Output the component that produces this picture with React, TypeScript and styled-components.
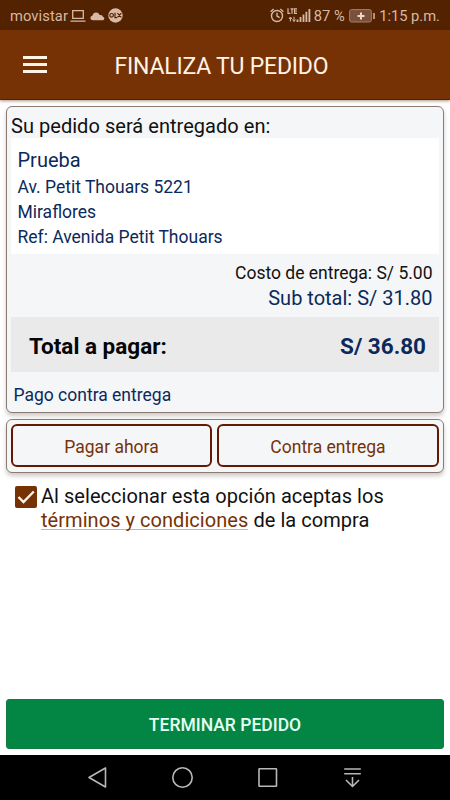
import React from "react";
import styled, { createGlobalStyle } from "styled-components";

const brown = "#763205";
const navy = "#0b2a5b";

const GlobalStyle = createGlobalStyle`
  *, *::before, *::after { box-sizing: border-box; }
  body { margin: 0; background: #fff; font-family: Roboto, sans-serif; }
  button { font-family: inherit; padding: 0; margin: 0; }
`;

const Screen = styled.div`
  width: 450px;
  height: 800px;
  display: flex;
  flex-direction: column;
  background: #fff;
  overflow: hidden;
`;

const StatusBar = styled.div`
  height: 30px;
  flex: none;
  display: flex;
  justify-content: space-between;
  padding: 1px 10px 0;
  background: #522201;
  color: #d8b9a5;
  font-size: 15px;
  line-height: 30px;
  white-space: nowrap;
`;

const StatusGroup = styled.div`
  display: flex;
  align-items: center;
  height: 29px;
`;

const StatusText = styled.span<{ $size?: number; $spacing?: number; $gap?: number }>`
  font-size: ${(p) => p.$size ?? 15}px;
  letter-spacing: ${(p) => p.$spacing ?? 0}px;
  margin-left: ${(p) => p.$gap ?? 0}px;
`;

const StatusIcon = styled.svg<{ $gap?: number }>`
  display: block;
  flex: none;
  margin-left: ${(p) => p.$gap ?? 0}px;
`;

const AppBar = styled.header`
  height: 70px;
  flex: none;
  display: flex;
  align-items: center;
  padding-left: 23px;
  background: ${brown};
  border-bottom: 1px solid #621c00;
  box-shadow: 0 1px 3px rgba(90, 40, 20, 0.5);
  color: #fff3e6;
`;

const MenuButton = styled.button`
  width: 24px;
  height: 17px;
  border: 0;
  background: none;
  display: flex;
  flex-direction: column;
  justify-content: space-between;
`;

const MenuLine = styled.span`
  display: block;
  width: 24px;
  height: 3px;
  background: #fff3e6;
`;

const Title = styled.h1`
  margin: 5px 0 0 67.5px;
  font-size: 23px;
  font-weight: 400;
  line-height: 30px;
  letter-spacing: -0.21px;
  white-space: nowrap;
`;

const Content = styled.main`
  flex: 1;
  display: flex;
  flex-direction: column;
  padding: 6px 6px;
`;

const Card = styled.section<{ $height: number }>`
  height: ${(p) => p.$height}px;
  flex: none;
  border: 1px solid #8c7b73;
  border-radius: 6px;
  background: #f4f6f8;
  box-shadow: 0 3px 4px rgba(60, 50, 40, 0.26);
`;

const OrderCard = styled(Card)`
  display: flex;
  flex-direction: column;
  padding: 6px 4px 0;
`;

const Line = styled.p<{ $size: number; $height: number; $color?: string; $spacing?: number }>`
  margin: 0;
  font-size: ${(p) => p.$size}px;
  line-height: ${(p) => p.$height}px;
  color: ${(p) => p.$color ?? "#111"};
  letter-spacing: ${(p) => p.$spacing ?? 0}px;
  white-space: nowrap;
`;

const Address = styled.div`
  height: 116px;
  margin-top: -1px;
  padding: 8px 7px 0 6.5px;
  background: #fff;
`;

const Costs = styled.div`
  height: 63px;
  padding: 7px 6.5px 0;
  text-align: right;
`;

const Total = styled.div`
  height: 55px;
  display: flex;
  justify-content: space-between;
  align-items: center;
  padding: 3px 13px 0 18px;
  background: #eaeaea;
  font-size: 22.5px;
  font-weight: 700;
  color: #050505;
  white-space: nowrap;
`;

const Amount = styled.span`
  color: ${navy};
`;

const Method = styled.div`
  padding: 11px 2.5px 0;
`;

const PayCard = styled(Card)`
  display: flex;
  gap: 5px;
  margin-top: 6px;
  padding: 4px;
`;

const PayButton = styled.button<{ $width: number }>`
  width: ${(p) => p.$width}px;
  height: 43px;
  border: 2px solid #641a02;
  border-radius: 6px;
  background: #f4f6f8;
  color: ${brown};
  font-size: 17.5px;
  padding-top: 2px;
  line-height: 24px;
`;

const Terms = styled.label`
  display: flex;
  margin: 11px 0 0 9px;
`;

const CheckBox = styled.span`
  width: 22px;
  height: 22px;
  margin-top: 2px;
  flex: none;
  border-radius: 2px;
  background: ${brown};
`;

const TermsText = styled.div`
  margin-left: 4px;
`;

const TermsLink = styled.a`
  display: inline-block;
  height: 22px;
  line-height: 24px;
  color: ${brown};
  border-bottom: 1px solid #c9b6a0;
`;

const SubmitButton = styled.button`
  height: 50px;
  margin-top: auto;
  border: 1px solid #167a43;
  border-radius: 3px;
  background: #038544;
  color: #e6fff1;
  font-size: 17.5px;
  font-weight: 500;
  padding-top: 2px;
`;

const NavBar = styled.nav`
  height: 45px;
  flex: none;
  background: #000;
`;

const Notices = () => (
  <>
    <StatusIcon $gap={2.2} width="16" height="14" viewBox="0 0 16 14" fill="none" stroke="#d8b9a5" strokeWidth="1.3">
      <path d="M2.7 1.7h10.6v7.6H2.7zM.5 12.2h15" />
    </StatusIcon>
    <StatusIcon $gap={3.5} width="15" height="10" viewBox="0 0 15 10" fill="#d8b9a5">
      <path d="M3 9.2C-.4 9-.3 5.2 2.4 4.8 3 1 8 .1 9.7 4c2-.5 3 .7 3.1 1.8 2.1.3 2 3.3 0 3.4z" />
    </StatusIcon>
    <StatusIcon $gap={3.3} width="15" height="15" viewBox="0 0 15 15">
      <circle cx="7.5" cy="7.5" r="7.2" fill="#d8b9a5" />
      <g fill="none" stroke="#522201" strokeWidth="1.2">
        <circle cx="3.6" cy="7.3" r="1.8" />
        <path d="M7 4.8v4.8h2M9.4 5.2l4 4.2M13.4 5.2l-4 4.2" />
      </g>
    </StatusIcon>
  </>
);

const Signals = () => (
  <>
    <StatusIcon width="14" height="15" viewBox="0 0 14 15" fill="none" stroke="#d8b9a5" strokeWidth="1.4">
      <circle cx="7" cy="8" r="5.5" />
      <path d="M7 4.7V8l2.6 1.7M.6 3.8l3-2.7M13.4 3.8l-3-2.7" />
    </StatusIcon>
    <StatusIcon $gap={3.5} width="24" height="17" viewBox="0 0 24 17" stroke="#d8b9a5" fill="none">
      <path d="M1 1.3v5h2.4M3.5 1.8h3M5 1.8v5M10 1.8H7.5v4.5H10M7.5 4H10" strokeWidth="1.2" />
      <path d="M3.4 14.5v-4M2 12l1.4-2L4.8 12M7 9.8v4.5M5.6 12.5L7 14.5l1.4-2" strokeWidth="1" />
      <path d="M10.5 15v-2.5M13.5 15v-5M16.5 15V7.5M19.4 15V4.8M22.4 15V2" strokeWidth="1.8" />
    </StatusIcon>
  </>
);

const Battery = () => (
  <StatusIcon $gap={4} width="27" height="14" viewBox="0 0 27 14">
    <rect x=".6" y=".6" width="21.8" height="12.4" rx="2" fill="#795039" stroke="#a57e68" />
    <path d="M25 4v6" stroke="#d8b9a5" strokeWidth="1.5" />
    <path d="M12 3.4v7M8.5 6.9h7" stroke="#f0d6c4" strokeWidth="2" />
  </StatusIcon>
);

export default function App() {
  return (
    <Screen>
      <GlobalStyle />
      <StatusBar>
        <StatusGroup>
          <StatusText $size={14.7} $spacing={0.1}>movistar</StatusText>
          <Notices />
        </StatusGroup>
        <StatusGroup>
          <Signals />
          <StatusText $gap={2.5} $size={14.7}>87 %</StatusText>
          <Battery />
          <StatusText $gap={3.5} $size={14.7}>1:15 p.m.</StatusText>
        </StatusGroup>
      </StatusBar>
      <AppBar>
        <MenuButton aria-label="Menú">
          <MenuLine />
          <MenuLine />
          <MenuLine />
        </MenuButton>
        <Title>FINALIZA TU PEDIDO</Title>
      </AppBar>
      <Content>
        <OrderCard $height={307}>
          <Line $size={20} $height={26} $spacing={0.04}>Su pedido será entregado en:</Line>
          <Address>
            <Line $size={20} $height={29} $color={navy}>Prueba</Line>
            <Line $size={17.5} $height={25} $color={navy}>Av. Petit Thouars 5221</Line>
            <Line $size={17.5} $height={25} $color={navy}>Miraflores</Line>
            <Line $size={17.5} $height={25} $color={navy}>Ref: Avenida Petit Thouars</Line>
          </Address>
          <Costs>
            <Line $size={17.5} $height={25}>Costo de entrega: S/ 5.00</Line>
            <Line $size={20} $height={24} $color={navy}>Sub total: S/ 31.80</Line>
          </Costs>
          <Total>
            <span>Total a pagar:</span>
            <Amount>S/ 36.80</Amount>
          </Total>
          <Method>
            <Line $size={17.5} $height={24} $color={navy}>Pago contra entrega</Line>
          </Method>
        </OrderCard>
        <PayCard $height={54}>
          <PayButton $width={201}>Pagar ahora</PayButton>
          <PayButton $width={222}>Contra entrega</PayButton>
        </PayCard>
        <Terms>
          <CheckBox>
            <svg width="22" height="22" viewBox="0 0 22 22" fill="none" stroke="#fff4e8" strokeWidth="2.4">
              <path d="M3.5 11l5 5L18.8 5.5" />
            </svg>
          </CheckBox>
          <TermsText>
            <Line $size={20} $height={24} $spacing={0.04}>Al seleccionar esta opción aceptas los</Line>
            <Line $size={20} $height={24} $spacing={0.05}>
              <TermsLink>términos y condiciones</TermsLink> de la compra
            </Line>
          </TermsText>
        </Terms>
        <SubmitButton>TERMINAR PEDIDO</SubmitButton>
      </Content>
      <NavBar>
        <svg width="450" height="45" viewBox="0 0 450 45" fill="none" stroke="#b8b8b8" strokeWidth="1.6" strokeLinejoin="round">
          <path d="M105.5 13v19L89 22.5z" />
          <circle cx="182.5" cy="22.5" r="9.7" />
          <rect x="259" y="13.8" width="17.5" height="17.5" rx=".5" />
          <path d="M344.2 14h16.6M344.2 18.7h16.6M352.5 22v9.5M346 25l6.5 6.5L359 25" />
        </svg>
      </NavBar>
    </Screen>
  );
}
